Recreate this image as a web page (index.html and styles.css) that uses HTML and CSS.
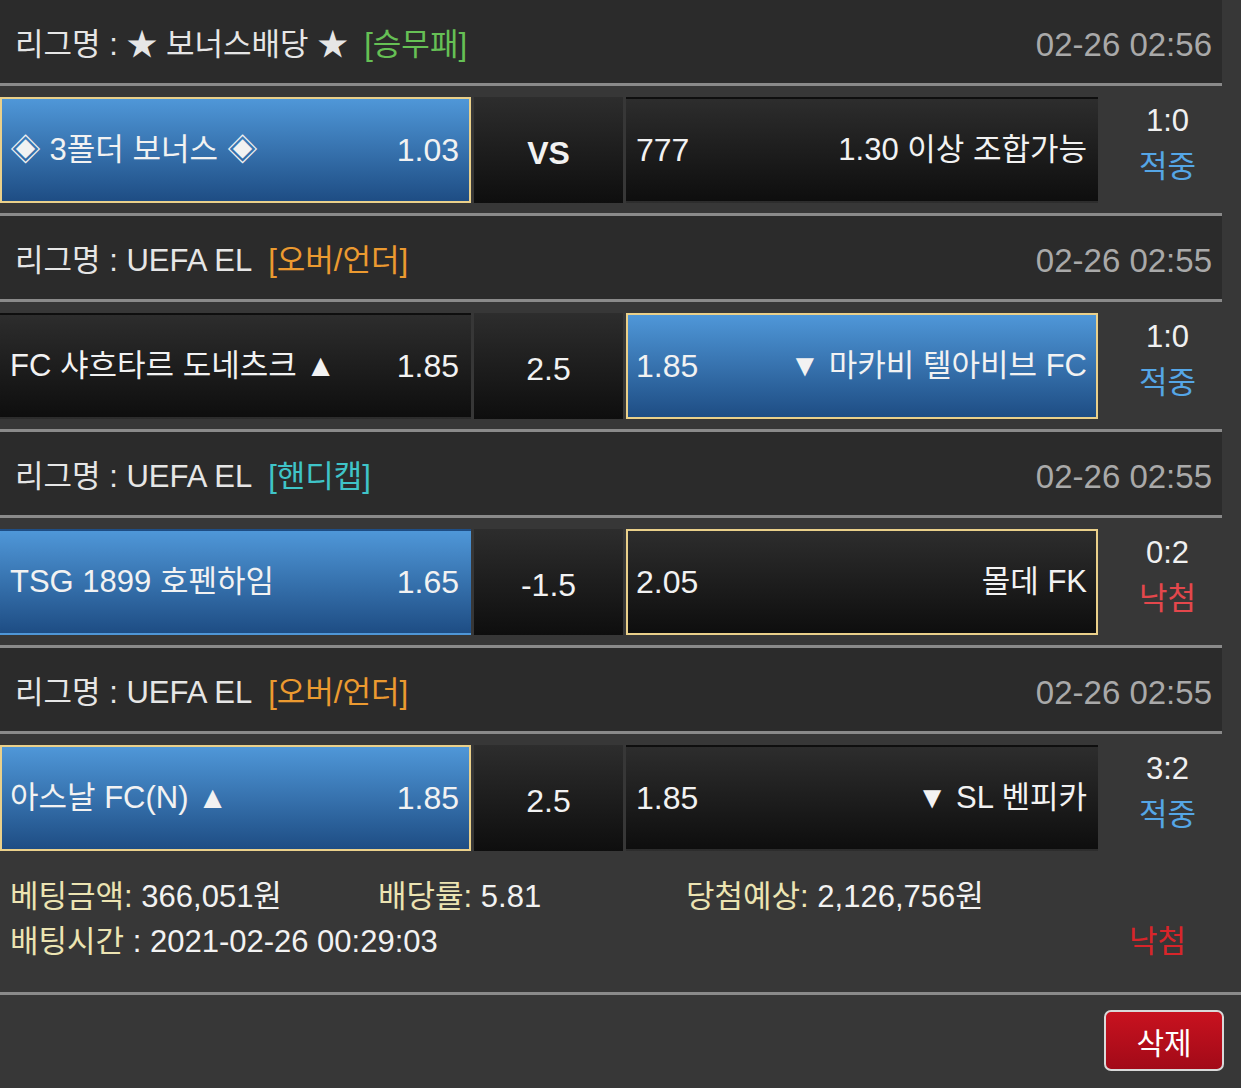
FILE: index.html
```html
<!DOCTYPE html>
<html lang="ko">
<head>
<meta charset="utf-8">
<title>베팅내역</title>
<link rel="stylesheet" href="styles.css">
</head>
<body>
<div class="slip">
  <div class="league">
    <div class="league-name">리그명 : ★ 보너스배당 ★<span class="type type-win">[승무패]</span></div>
    <div class="time">02-26 02:56</div>
  </div>
  <div class="match">
    <div class="pick pick-blue selected"><span class="team">◈ 3폴더 보너스 ◈</span><span class="odds">1.03</span></div>
    <div class="mid vs">VS</div>
    <div class="pick pick-dark"><span class="odds">777</span><span class="team">1.30 이상 조합가능</span></div>
    <div class="result"><span class="score">1:0</span><span class="status hit">적중</span></div>
  </div>

  <div class="league">
    <div class="league-name">리그명 : UEFA EL<span class="type type-ou">[오버/언더]</span></div>
    <div class="time">02-26 02:55</div>
  </div>
  <div class="match">
    <div class="pick pick-dark"><span class="team">FC 샤흐타르 도네츠크 ▲</span><span class="odds">1.85</span></div>
    <div class="mid">2.5</div>
    <div class="pick pick-blue selected"><span class="odds">1.85</span><span class="team">▼ 마카비 텔아비브 FC</span></div>
    <div class="result"><span class="score">1:0</span><span class="status hit">적중</span></div>
  </div>

  <div class="league">
    <div class="league-name">리그명 : UEFA EL<span class="type type-hc">[핸디캡]</span></div>
    <div class="time">02-26 02:55</div>
  </div>
  <div class="match">
    <div class="pick pick-blue"><span class="team">TSG 1899 호펜하임</span><span class="odds">1.65</span></div>
    <div class="mid">-1.5</div>
    <div class="pick pick-dark selected"><span class="odds">2.05</span><span class="team">몰데 FK</span></div>
    <div class="result"><span class="score">0:2</span><span class="status miss">낙첨</span></div>
  </div>

  <div class="league">
    <div class="league-name">리그명 : UEFA EL<span class="type type-ou">[오버/언더]</span></div>
    <div class="time">02-26 02:55</div>
  </div>
  <div class="match">
    <div class="pick pick-blue selected"><span class="team">아스날 FC(N) ▲</span><span class="odds">1.85</span></div>
    <div class="mid">2.5</div>
    <div class="pick pick-dark"><span class="odds">1.85</span><span class="team">▼ SL 벤피카</span></div>
    <div class="result"><span class="score">3:2</span><span class="status hit">적중</span></div>
  </div>
</div>

<div class="summary">
  <div class="summary-stats">
    <div><span class="label">베팅금액:</span> 366,051원</div>
    <div><span class="label">배당률:</span> 5.81</div>
    <div><span class="label">당첨예상:</span> 2,126,756원</div>
  </div>
  <div class="summary-time">
    <div><span class="label">배팅시간</span> : 2021-02-26 00:29:03</div>
    <div class="final-miss">낙첨</div>
  </div>
</div>

<div class="actions">
  <button class="btn-delete" type="button">삭제</button>
</div>
</body>
</html>
```

FILE: styles.css
```css
* {
  box-sizing: border-box;
}

html, body {
  margin: 0;
  padding: 0;
}

body {
  background: #373737;
  color: #f2f2f2;
  font-family: "Liberation Sans", "Noto Sans CJK KR", sans-serif;
  font-size: 31px;
  line-height: 1.2;
  width: 1241px;
  height: 1088px;
  overflow: hidden;
}

.slip {
  width: 1222px;
}

.league {
  height: 86px;
  padding: 7px 10px 0 15px;
  background: #2b2b2b;
  border-bottom: 3px solid #8a8a8a;
  display: flex;
  align-items: center;
  justify-content: space-between;
  color: #e6e6e6;
}

.type {
  margin-left: 16px;
}

.type-win {
  color: #66c055;
}

.type-ou {
  color: #ec9a30;
}

.type-hc {
  color: #3fc4c8;
}

.time {
  color: #a9a9a9;
  font-size: 33px;
}

.match {
  display: grid;
  grid-template-columns: 471px 149px 472px 1fr;
  column-gap: 3px;
  padding: 11px 0 10px;
  height: 130px;
  border-bottom: 3px solid #8a8a8a;
}

.match:last-child {
  border-bottom: none;
  height: 127px;
}

.pick {
  height: 106px;
  display: flex;
  align-items: center;
  justify-content: space-between;
  border: 2px solid transparent;
  padding: 0 10px 0 8px;
  white-space: nowrap;
}

.odds {
  font-size: 32px;
}

.pick-blue {
  background: linear-gradient(#4f97d8, #1e4d84);
}

.pick-dark {
  background: linear-gradient(#2d2d2d, #0e0e0e);
}

.pick.selected {
  border-color: #ead08a;
}

.match .pick:nth-child(3) {
  padding: 0 9px 0 8px;
}

.mid {
  height: 106px;
  display: flex;
  align-items: center;
  justify-content: center;
  padding-top: 6px;
  font-size: 32px;
  background: linear-gradient(#2d2d2d, #0e0e0e);
}

.vs {
  font-weight: bold;
}

.result {
  display: flex;
  flex-direction: column;
  align-items: center;
  line-height: 46px;
  padding-left: 12px;
  padding-top: 1px;
}

.score {
  color: #f0f0f0;
}

.hit {
  color: #55a6e6;
}

.miss {
  color: #e4474c;
}

.summary {
  padding: 13px 55px 28px 10px;
  line-height: 45px;
  border-bottom: 3px solid #8a8a8a;
}

.summary-stats {
  display: grid;
  grid-template-columns: 368px 308px auto;
}

.summary-time {
  display: flex;
  justify-content: space-between;
}

.label {
  color: #ece4b2;
}

.final-miss {
  color: #d8252a;
}

.actions {
  display: flex;
  justify-content: flex-end;
  padding: 15px 17px 0 0;
}

.btn-delete {
  width: 120px;
  height: 61px;
  border: 2px solid #d9d9d9;
  border-radius: 7px;
  background: linear-gradient(#c8121f, #a20a18);
  color: #ffffff;
  font-family: "Liberation Sans", "Noto Sans CJK KR", sans-serif;
  font-size: 30px;
  padding: 0;
  cursor: pointer;
}
```
